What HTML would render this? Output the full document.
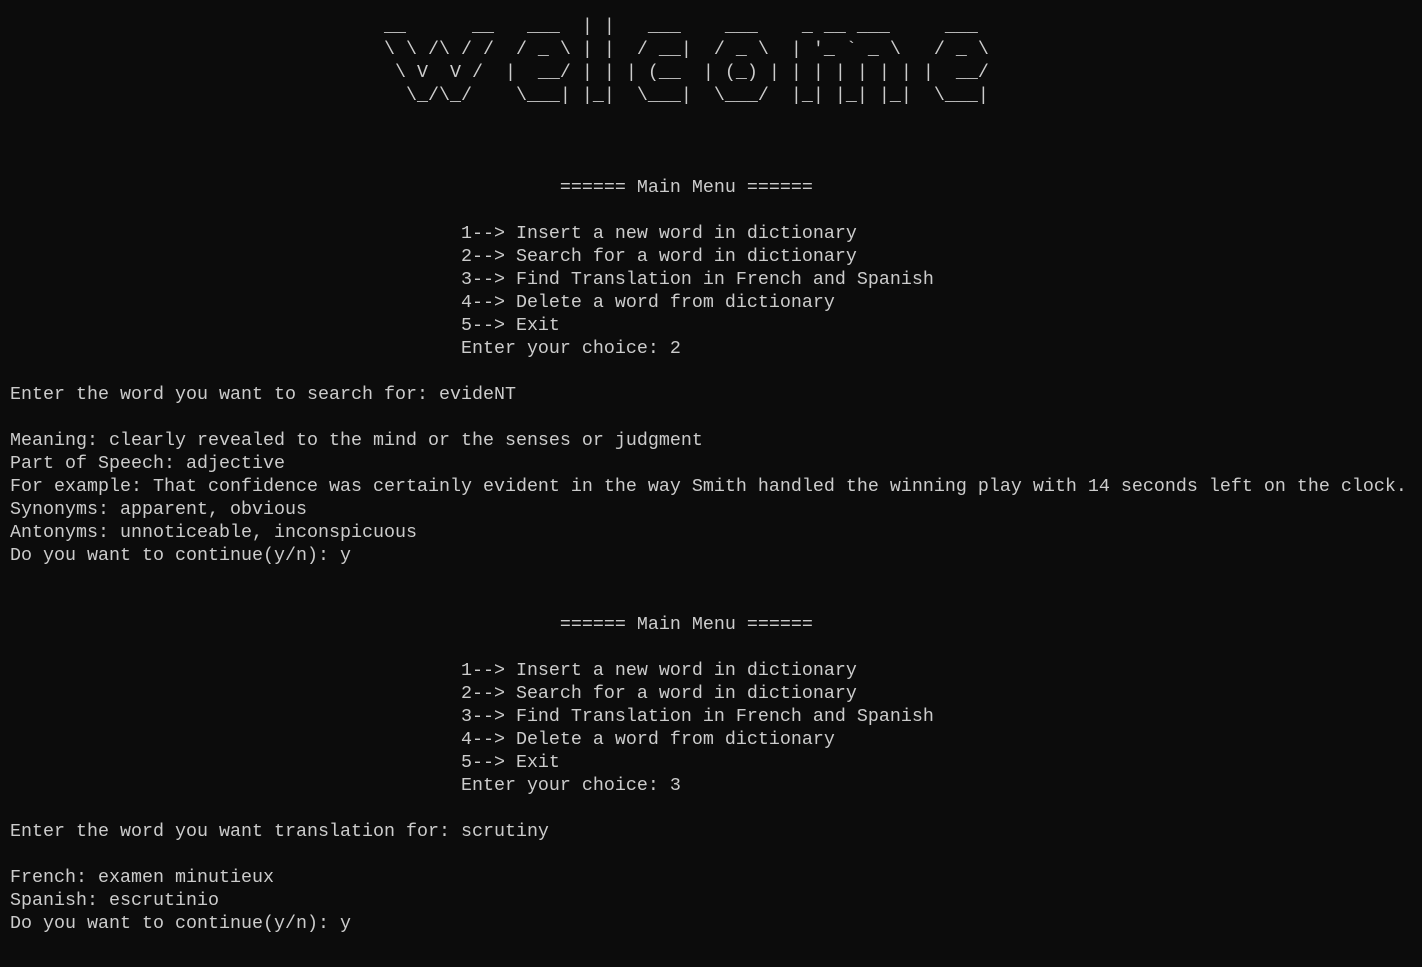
<!DOCTYPE html>
<html><head><meta charset="utf-8"><style>
html,body{margin:0;padding:0;background:#0c0c0c;width:1422px;height:967px;overflow:hidden}
pre{margin:0;position:absolute;left:10px;top:15px;font-family:"Liberation Mono",monospace;font-size:18.33px;line-height:23px;color:#cccccc;white-space:pre}
</style></head><body><pre>                                  __      __   ___  | |   ___    ___    _ __ ___     ___ 
                                  \ \ /\ / /  / _ \ | |  / __|  / _ \  | '_ ` _ \   / _ \
                                   \ V  V /  |  __/ | | | (__  | (_) | | | | | | | |  __/
                                    \_/\_/    \___| |_|  \___|  \___/  |_| |_| |_|  \___|



                                                  ====== Main Menu ======

                                         1--> Insert a new word in dictionary
                                         2--> Search for a word in dictionary
                                         3--> Find Translation in French and Spanish
                                         4--> Delete a word from dictionary
                                         5--> Exit
                                         Enter your choice: 2

Enter the word you want to search for: evideNT

Meaning: clearly revealed to the mind or the senses or judgment
Part of Speech: adjective
For example: That confidence was certainly evident in the way Smith handled the winning play with 14 seconds left on the clock.
Synonyms: apparent, obvious
Antonyms: unnoticeable, inconspicuous
Do you want to continue(y/n): y


                                                  ====== Main Menu ======

                                         1--> Insert a new word in dictionary
                                         2--> Search for a word in dictionary
                                         3--> Find Translation in French and Spanish
                                         4--> Delete a word from dictionary
                                         5--> Exit
                                         Enter your choice: 3

Enter the word you want translation for: scrutiny

French: examen minutieux
Spanish: escrutinio
Do you want to continue(y/n): y</pre></body></html>
